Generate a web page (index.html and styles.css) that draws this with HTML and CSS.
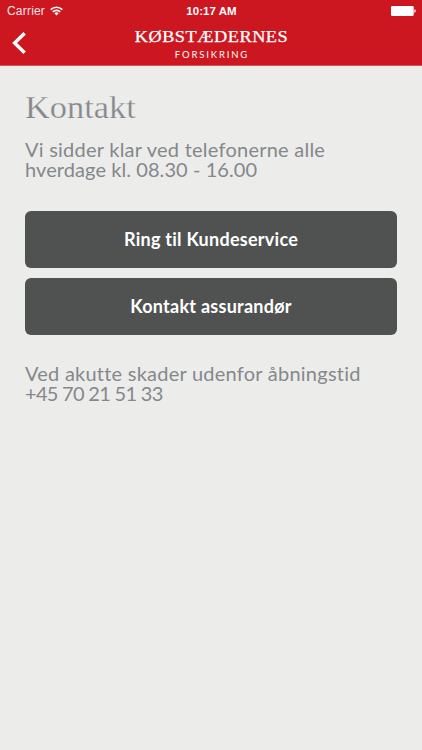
FILE: index.html
```html
<!DOCTYPE html>
<html lang="da">
<head>
<meta charset="utf-8">
<title>Kontakt</title>
<link rel="stylesheet" href="styles.css">
</head>
<body>
<header class="header">
  <div class="status">
    <div class="carrier"><span>Carrier</span>
      <svg class="wifi" width="13" height="10" viewBox="0 0 13 10"><g fill="none" stroke="currentColor" stroke-width="1.6"><path d="M.7 3.6a8.2 8.2 0 0 1 11.6 0"/><path d="M2.8 5.9a5.2 5.2 0 0 1 7.4 0"/></g><path d="M4.4 7.3a3 3 0 0 1 4.2 0L6.5 9.5z" fill="currentColor"/></svg>
    </div>
    <span class="time">10:17 AM</span>
    <svg class="battery" width="25" height="10" viewBox="0 0 25 10" fill="currentColor"><rect width="22.7" height="10" rx="1.2"/><path d="M23.4 3.3c1.8.3 1.8 3.1 0 3.4z"/></svg>
  </div>
  <nav class="nav">
    <a class="back" href="#" aria-label="Tilbage"><svg width="14" height="22" viewBox="0 0 14 22"><path d="M12.6 1.2 2.6 11l10 9.8" fill="none" stroke="currentColor" stroke-width="3.4"/></svg></a>
    <div class="brand"><span class="brand-name">KØBSTÆDERNES</span><span class="brand-sub">FORSIKRING</span></div>
  </nav>
</header>
<main class="content">
  <h1 class="title">Kontakt</h1>
  <p class="text"><span class="line">Vi sidder klar ved telefonerne alle</span><span class="line hours">hverdage kl. 08.30 - 16.00</span></p>
  <div class="actions">
    <a class="button" href="#">Ring til Kundeservice</a>
    <a class="button" href="#">Kontakt assurandør</a>
  </div>
  <p class="text"><span class="line">Ved akutte skader udenfor åbningstid</span><span class="line phone">+45 70 21 51 33</span></p>
</main>
</body>
</html>
```
FILE: styles.css
```css
* { box-sizing: border-box; }
body { margin: 0; min-height: 750px; background: #ececeb; color: #85888b; font-family: Lato, "Liberation Sans", sans-serif; font-variant-ligatures: none; }
.header { height: 66px; background: #cc1720; border-bottom: 1px solid #d4545b; color: #fff; }
.status { display: grid; grid-template-columns: 1fr auto 1fr; align-items: center; height: 22px; padding: 0 6px 0 7px; font: 12px/22px "Liberation Sans", sans-serif; }
.carrier { display: flex; align-items: center; gap: 5px; color: #fbe4e5; letter-spacing: .2px; }
.wifi { color: #fff; }
.time { font-weight: 700; font-size: 11.5px; letter-spacing: .05px; }
.battery { justify-self: end; }
.nav { display: grid; grid-template-columns: 40px 1fr 40px; height: 43px; }
.back { padding: 10px 0 0 12px; color: #fff; }
.back svg { display: block; }
.brand { display: flex; flex-direction: column; align-items: center; white-space: nowrap; padding-top: 6px; }
.brand-name { font: 16.5px/18px "Liberation Serif", serif; letter-spacing: .5px; transform: scaleX(1.105); -webkit-text-stroke: .25px #fff; }
.brand-sub { margin-top: 3px; padding-left: 2px; font-size: 9.5px; line-height: 11px; letter-spacing: 1.85px; }
.content { padding: 24px 25px 0; }
.title { width: max-content; margin: 0; font: 400 31px/36px "Liberation Serif", serif; letter-spacing: 0; transform: scaleX(1.11); transform-origin: left; -webkit-text-stroke: .25px #ececeb; }
.text { margin: 13px 0 0; font-size: 20px; line-height: 20px; letter-spacing: .24px; white-space: nowrap; }
.line { display: block; height: 20px; }
.hours { letter-spacing: .08px; }
.phone { letter-spacing: -.7px; }
.actions { display: grid; gap: 10px; margin: 32px 0 28px; }
.button { display: flex; align-items: center; justify-content: center; height: 57px; padding-bottom: 2px; border-radius: 6px; background: #505251; color: #fff; font-size: 18px; font-weight: 700; letter-spacing: .26px; text-decoration: none; }
```
